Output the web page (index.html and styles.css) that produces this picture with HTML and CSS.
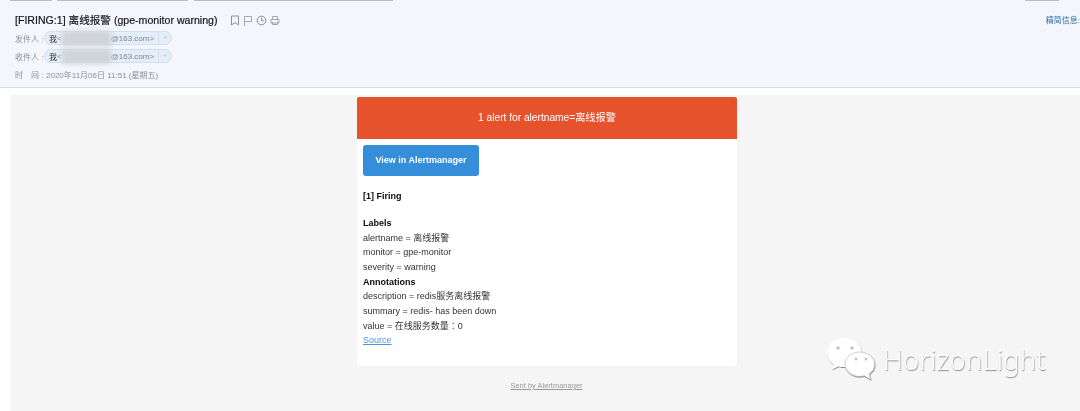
FILE: index.html
```html
<!DOCTYPE html>
<html lang="zh-CN">
<head>
<meta charset="utf-8">
<title>[FIRING:1] 离线报警</title>
<link rel="stylesheet" href="styles.css">
</head>
<body>
<div class="page">
  <div class="tabs">
    <span class="tab t1"></span><span class="tab t2"></span><span class="tab t3"></span><span class="tab t4"></span>
  </div>
  <header class="head">
    <div class="top">
      <div class="subject">
        <h1>[FIRING:1] 离线报警 (gpe-monitor warning)</h1>
        <div class="tools">
          <svg width="10" height="11" viewBox="0 0 10 11"><path d="M1.500 1h7v9L5 7.500 1.500 10z" fill="none" stroke="#8b929b"/></svg>
          <svg width="10" height="11" viewBox="0 0 10 11"><path d="M1.500 11V1.500h7v5h-7" fill="none" stroke="#9aa1a9" stroke-width=".9"/></svg>
          <svg width="11" height="11" viewBox="0 0 11 11"><circle cx="5.500" cy="5.500" r="4.300" fill="none" stroke="#868d96"/><path d="M5.500 2.800v2.900h2.300" fill="none" stroke="#868d96"/></svg>
          <svg width="10" height="11" viewBox="0 0 10 11"><path d="M2.500 4V1.500h5V4M1 4.500h8v3.500H1zM2.500 7v2.500h5V7" fill="none" stroke="#a3a9b0"/></svg>
        </div>
      </div>
      <a class="brief">精简信息:</a>
    </div>
    <div class="row">
      <span class="key">发件人 :</span>
      <span class="chip"><span class="me">我</span>&lt;<span class="mask"></span>@163.com&gt;<span class="plus">+</span></span>
    </div>
    <div class="row">
      <span class="key">收件人 :</span>
      <span class="chip"><span class="me">我</span>&lt;<span class="mask"></span>@163.com&gt;<span class="plus">+</span></span>
    </div>
    <div class="row">
      <span class="key">时　间 :</span>
      <span class="date">2020年11月06日 11:51 (星期五)</span>
    </div>
  </header>
  <main class="body">
    <div class="mail">
      <article class="card">
        <div class="alert">1 alert for alertname=离线报警</div>
        <div class="content">
          <a class="btn">View in Alertmanager</a>
          <p class="firing"><strong>[1] Firing</strong></p>
          <p class="line"><strong>Labels</strong></p>
          <p class="line">alertname = 离线报警</p>
          <p class="line">monitor = gpe-monitor</p>
          <p class="line">severity = warning</p>
          <p class="line"><strong>Annotations</strong></p>
          <p class="line">description = redis服务离线报警</p>
          <p class="line">summary = redis- has been down</p>
          <p class="line">value = 在线服务数量<span class="colon" lang="zh-Hant">：</span>0</p>
          <p class="line"><a class="source">Source</a></p>
        </div>
      </article>
      <a class="sent">Sent by Alertmanager</a>
    </div>
  </main>
  <div class="mark">
    <svg width="50" height="44" viewBox="0 0 50 44">
      <defs>
        <filter id="sh" x="-10%" y="-10%" width="125%" height="125%"><feDropShadow dx="0.500" dy="1" stdDeviation="0.600" flood-color="#777" flood-opacity=".8"/></filter>
      </defs>
      <g filter="url(#sh)" fill="#fff">
        <path transform="scale(1.080)" d="M17 1C8 1 1 7 1 14.500c0 4.500 2.500 8.200 6.300 10.700L5.500 30l6-3c1.800.5 3.600.8 5.500.8 9 0 16-6 16-13.300C33 7 26 1 17 1z"/>
        <path transform="translate(-1 1) scale(1.080)" d="M32 13c-7.500 0-13.500 5-13.500 11.200S24.500 35.500 32 35.500c1.500 0 3-.2 4.300-.6l6 3.600-1.500-5.200c3.300-2.100 5.200-5.300 5.200-8.900C46 18 39.500 13 32 13z" stroke="#aaa" stroke-width=".5"/>
      </g>
      <g fill="#c4c4c4"><circle cx="12" cy="11" r="1.800"/><circle cx="26" cy="11" r="1.800"/><circle cx="30" cy="22" r="1.500"/><circle cx="40" cy="22" r="1.500"/></g>
    </svg>
    <span class="mark-text">HorizonLight</span>
  </div>
</div>
</body>
</html>
```

FILE: styles.css
```css
* { box-sizing: border-box; }
html, body { margin: 0; padding: 0; }
body {
  width: 1080px;
  height: 411px;
  overflow: hidden;
  background: #fff;
  font-family: "Liberation Sans", "Noto Sans CJK SC", sans-serif;
}
.page {
  position: relative;
  width: 1080px;
  height: 411px;
  overflow: hidden;
  filter: blur(0.45px);
}
.colon { font-family: "Noto Sans CJK TC", sans-serif; }
.tabs {
  display: flex;
  height: 1px;
  background: #f4f6fb;
}
.tab { height: 1px; background: #b9bcc0; }
.t1 { width: 42px; margin-left: 10px; }
.t2 { width: 131px; margin-left: 5px; }
.t3 { width: 199px; margin-left: 6px; }
.t4 { width: 34px; margin-left: 632px; }

.head {
  height: 87px;
  padding: 12px 0 0 15px;
  background: #f4f6fb;
  border-bottom: 1px solid #d9dfe8;
}
.top {
  display: flex;
  justify-content: space-between;
  height: 15px;
  margin-bottom: 1px;
}
.subject { display: flex; align-items: center; }
h1 {
  margin: 0;
  font-size: 10.600px;
  line-height: 15px;
  font-weight: 400;
  color: #15171b;
  -webkit-text-stroke: 0.2px #15171b;
  white-space: nowrap;
}
.tools {
  display: flex;
  align-items: center;
  gap: 3px;
  margin-left: 12px;
}
.brief {
  font-size: 8px;
  line-height: 15px;
  color: #2f6da8;
  white-space: nowrap;
}
.row {
  display: flex;
  align-items: center;
  height: 18px;
  font-size: 8px;
  color: #8a9097;
}
.key { width: 29px; white-space: nowrap; }
.chip {
  display: flex;
  align-items: center;
  height: 14px;
  padding-left: 4px;
  background: #e4eef9;
  border: 1px solid #cfe0f1;
  border-radius: 7px;
  color: #7c858f;
  white-space: nowrap;
}
.me { color: #333; }
.mask {
  display: block;
  flex: none;
  width: 49px;
  height: 15px;
  background: #d0d3d7;
  filter: blur(2.5px);
}
.plus {
  width: 13px;
  height: 12px;
  margin-left: 4px;
  border-left: 1px solid #cfe0f1;
  color: #b3c6da;
  line-height: 12px;
  text-align: center;
}
.date { margin-left: 2px; color: #8a9097; }

.body {
  height: 323px;
  padding: 7px 0 0 11px;
  background: #fff;
}
.mail {
  height: 316px;
  background: #f5f5f5;
  padding-top: 2px;
  display: flex;
  flex-direction: column;
  align-items: center;
}
.card {
  width: 380px;
  height: 269px;
  margin-left: 3px;
  background: #fff;
  border-radius: 2px;
  overflow: hidden;
}
.alert {
  height: 42px;
  background: #e6522c;
  color: #fff;
  font-size: 10.200px;
  line-height: 42px;
  text-align: center;
}
.content {
  padding: 6px;
  font-size: 9px;
  color: #333;
}
.btn {
  display: block;
  width: 116px;
  height: 31px;
  background: #348eda;
  border-radius: 3px;
  color: #fff;
  font-size: 9px;
  font-weight: 700;
  line-height: 31px;
  text-align: center;
}
.content p { margin: 0; }
.content strong { color: #0c0c0c; }
.content .firing {
  height: 27px;
  margin-top: 13px;
  line-height: 14.600px;
}
.content .line { line-height: 14.660px; white-space: nowrap; }
.source { color: #4a94e0; text-decoration: underline; }
.sent {
  margin-top: 15px;
  margin-left: 2px;
  font-size: 7.500px;
  color: #999;
  text-decoration: underline;
}

.mark {
  position: absolute;
  left: 826px;
  top: 337px;
  display: flex;
  align-items: center;
  gap: 7px;
}
.mark-text {
  font-family: "Noto Sans", sans-serif;
  font-weight: 300;
  font-size: 27.700px;
  line-height: 40px;
  color: #fff;
  text-shadow: 0.500px 1px 1px #8a8a8a;
  white-space: nowrap;
}
```
